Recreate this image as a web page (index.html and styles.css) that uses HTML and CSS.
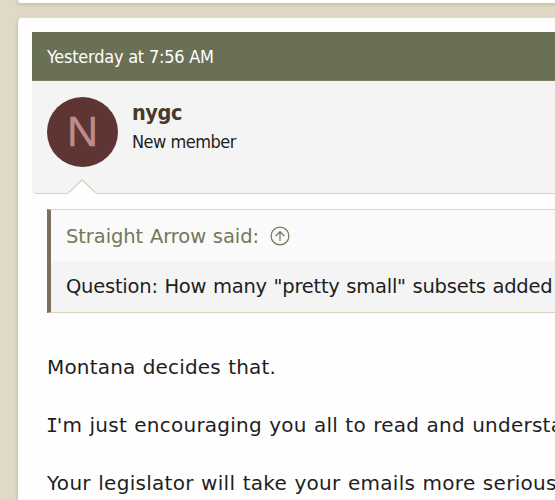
FILE: index.html
```
<!DOCTYPE html>
<html lang="en">
<head>
<meta charset="utf-8">
<title>Thread</title>
<link rel="stylesheet" href="styles.css">
</head>
<body>
<main class="thread">
  <div class="card card-previous"></div>
  <article class="card card-post">
    <header class="post-date"><time class="date">Yesterday at 7:56 AM</time></header>
    <section class="post-user">
      <div class="avatar"><span class="initial">N</span></div>
      <div class="user-details">
        <h4 class="user-name">nygc</h4>
        <p class="user-title">New member</p>
      </div>
      <svg class="notch" width="28" height="15" viewBox="0 0 28 15"><path d="M0 15V14L14 .5L28 14V15Z" fill="#fefefe"/><path d="M.5 13.7L14 .7L27.5 13.7" fill="none" stroke="#d6d1bd" stroke-width="1.2"/></svg>
    </section>
    <div class="post-body">
      <blockquote class="quote">
        <div class="quote-head"><span class="quote-author">Straight Arrow said:</span>
          <svg class="jump" width="20" height="20" viewBox="0 0 20 20" fill="none" stroke="#727858" stroke-width="1.2"><circle cx="10" cy="10" r="8.9"/><path d="M10 15V5.7M5.7 10L10 5.7L14.3 10"/></svg>
        </div>
        <div class="quote-text">Question: How many "pretty small" subsets added</div>
      </blockquote>
      <p class="line">Montana decides that.</p>
      <p class="line line-second"><span class="serif-i">I</span>'m just encouraging you all to read and understa</p>
      <p class="line line-third">Your legislator will take your emails more serious</p>
    </div>
  </article>
</main>
</body>
</html>
```
FILE: styles.css
```
* { box-sizing: border-box; margin: 0; padding: 0; }
html, body { width: 555px; height: 500px; overflow: hidden; }
body { background: #dfd9c5; color: #1e1e1e; font-family: Verdana, "DejaVu Sans", sans-serif; font-size: 20px; }
.thread { width: 555px; height: 500px; padding-left: 17px; display: flex; flex-direction: column; gap: 13px; overflow: hidden; }
.card { background: #fefefe; border: 1px solid #cdc6b2; border-top-color: #e0dbce; border-right: 0; border-radius: 5px 0 0 5px; box-shadow: 0 1px 3px rgba(120, 105, 60, .25); flex: none; }
.card-previous { height: 4px; border-top: 0; border-radius: 0 0 0 5px; }
.card-post { height: 600px; padding: 14px 0 14px 14px; }
.post-date { height: 49px; background: #6a7056; border-bottom: 1px solid #7b8064; color: #fff; padding-left: 15px; line-height: 49px; font-family: Tahoma, "DejaVu Sans Condensed", "DejaVu Sans", sans-serif; font-size: 18px; letter-spacing: -.23px; white-space: nowrap; }
.post-user { position: relative; height: 113px; display: flex; gap: 14px; padding: 16px 15px; background: #f4f4f4; border: solid #d6d1bd; border-width: 0 0 1px; border-bottom-left-radius: 5px; }
.avatar { width: 71px; height: 70px; border-radius: 50%; background: #5f3534; color: #bf8c8c; display: flex; align-items: center; justify-content: center; font-family: "Liberation Sans", sans-serif; font-size: 43px; line-height: 68px; }
.initial { -webkit-text-stroke: .4px #bf8c8c; margin-top: -2px; }
.user-details { white-space: nowrap; }
.user-name { height: 30px; line-height: 31px; font-family: "DejaVu Sans Condensed", "DejaVu Sans", sans-serif; font-size: 21.5px; letter-spacing: -.4px; color: #463b28; }
.user-title { line-height: 30px; font-family: Tahoma, "DejaVu Sans Condensed", sans-serif; font-size: 18px; letter-spacing: -.5px; }
.notch { position: absolute; left: 36px; bottom: -1px; }
.post-body { padding: 15px 0 0 15px; }
.quote { height: 104px; border: solid #d9d4c2; border-width: 1px 0 1px 4px; border-left-color: #7b705c; background: #f4f4f4; margin-bottom: 40px; white-space: nowrap; font-size: 19.5px; }
.quote-head { height: 51px; padding-left: 15px; display: flex; align-items: center; gap: 11px; background: #fafafa; color: #727858; letter-spacing: -.08px; word-spacing: .7px; }
.quote-author { padding-top: 2px; }
.quote-text { padding-left: 15px; height: 50px; line-height: 52px; letter-spacing: -.23px; word-spacing: .7px; }
.line { height: 29px; line-height: 29px; margin-bottom: 29px; white-space: nowrap; letter-spacing: .18px; word-spacing: .7px; }
.line-second { letter-spacing: .24px; }
.line-third { letter-spacing: .29px; }
.serif-i { font-family: "DejaVu Sans Mono", monospace; margin: 0 -1.5px 0 -1px; }
```
